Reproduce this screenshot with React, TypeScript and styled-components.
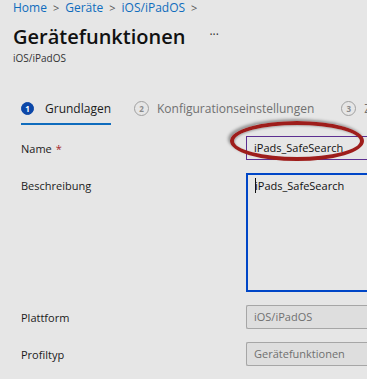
import React from "react";
import styled, { createGlobalStyle } from "styled-components";

const Global = createGlobalStyle`
  html, body { margin: 0; padding: 0; background: #e6e6e6; }
  body { font-family: "Open Sans", "Noto Sans", sans-serif; color: #1b1b1b; overflow: hidden; }
`;

const Page = styled.div`
  width: 367px;
  height: 379px;
  overflow: hidden;
  background: #e6e6e6;
  position: relative;
`;

const Header = styled.div`
  padding: 2px 0 0 13px;
`;

const Breadcrumb = styled.div`
  display: flex;
  align-items: center;
  gap: 6px;
  font-size: 12px;
  line-height: 12px;
  color: #0f6cbd;
  height: 12px;
  white-space: nowrap;
`;

const Sep = styled.span`
  color: #555;
  font-size: 11px;
`;

const TitleRow = styled.div`
  display: flex;
  align-items: center;
  margin-top: 9px;
  height: 26px;
`;

const Title = styled.h1`
  margin: 0;
  font-size: 20px;
  font-weight: 600;
  color: #111;
`;

const More = styled.span`
  margin-left: 24px;
  font-size: 12px;
  color: #333;
  line-height: 1;
  margin-top: -2px;
`;

const Subtitle = styled.div`
  font-size: 10px;
  color: #333;
  margin-top: 2px;
`;

const Tabs = styled.div`
  display: flex;
  margin-top: 32px;
  padding-left: 21px;
  white-space: nowrap;
`;

const Tab = styled.div<{ $active?: boolean }>`
  display: flex;
  align-items: center;
  gap: ${(p) => (p.$active ? "11px" : "8px")};
  height: 22px;
  padding-bottom: 4px;
  margin-right: ${(p) => (p.$active ? "23px" : "27px")};
  border-bottom: 2px solid ${(p) => (p.$active ? "#0f6cbd" : "transparent")};
  color: ${(p) => (p.$active ? "#1b1b1b" : "#707070")};
  font-size: 12px;
`;

const StepCircle = styled.span<{ $active?: boolean }>`
  width: ${(p) => (p.$active ? "13px" : "15px")};
  height: ${(p) => (p.$active ? "13px" : "15px")};
  box-sizing: border-box;
  border-radius: 50%;
  display: inline-flex;
  align-items: center;
  justify-content: center;
  font-size: 8px;
  font-weight: 700;
  background: ${(p) => (p.$active ? "#0c47a8" : "transparent")};
  color: ${(p) => (p.$active ? "#fff" : "#8a8a8a")};
  border: 1px solid ${(p) => (p.$active ? "#0c47a8" : "#a0a0a0")};
`;

const Form = styled.div`
  display: grid;
  grid-template-columns: 225px 1fr;
  padding-left: 21px;
  margin-top: 11px;
  row-gap: 13px;
  align-items: start;
`;

const Label = styled.div`
  font-size: 11px;
  color: #1b1b1b;
  height: 24px;
  display: flex;
  align-items: center;
`;

const Req = styled.span`
  color: #a4262c;
  margin-left: 4px;
`;

const Input = styled.div<{ $variant: "name" | "focus" | "disabled" }>`
  box-sizing: border-box;
  width: 140px;
  height: ${(p) => (p.$variant === "focus" ? "119px" : "24px")};
  padding: ${(p) => (p.$variant === "focus" ? "3px 0 0 7px" : "0 0 0 7px")};
  display: flex;
  align-items: ${(p) => (p.$variant === "focus" ? "flex-start" : "center")};
  font-size: 11px;
  line-height: 16px;
  white-space: nowrap;
  border-radius: ${(p) => (p.$variant === "disabled" ? "2px" : "0")};
  border: ${(p) =>
    p.$variant === "name"
      ? "1px solid #5c2e91"
      : p.$variant === "focus"
      ? "2px solid #0046c7"
      : "1px solid #a6a6a6"};
  border-right: none;
  background: ${(p) => (p.$variant === "disabled" ? "#dedede" : "transparent")};
  color: ${(p) => (p.$variant === "disabled" ? "#707070" : "#111")};
`;

const Caret = styled.span`
  display: inline-block;
  width: 1px;
  height: 15px;
  background: #111;
  margin-right: -1px;
`;

const Highlight = styled.div`
  position: absolute;
  left: 230px;
  top: 121px;
  width: 134px;
  height: 40px;
  border: 4px solid #9e1d1b;
  border-radius: 50%;
  box-sizing: border-box;
  box-shadow: -2px -2px 3px rgba(0, 0, 0, 0.35), inset 1px 1px 2px rgba(0, 0, 0, 0.25);
  pointer-events: none;
`;

export default function App() {
  return (
    <Page>
      <Global />
      <Header>
        <Breadcrumb>
          <span>Home</span>
          <Sep>&gt;</Sep>
          <span>Geräte</span>
          <Sep>&gt;</Sep>
          <span>iOS/iPadOS</span>
          <Sep>&gt;</Sep>
        </Breadcrumb>
        <TitleRow>
          <Title>Gerätefunktionen</Title>
          <More>···</More>
        </TitleRow>
        <Subtitle>iOS/iPadOS</Subtitle>
      </Header>
      <Tabs>
        <Tab $active>
          <StepCircle $active>1</StepCircle>
          Grundlagen
        </Tab>
        <Tab>
          <StepCircle>2</StepCircle>
          Konfigurationseinstellungen
        </Tab>
        <Tab>
          <StepCircle>3</StepCircle>
          Zuweisungen
        </Tab>
      </Tabs>
      <Form>
        <Label>
          Name<Req>*</Req>
        </Label>
        <Input $variant="name">iPads_SafeSearch</Input>
        <Label>Beschreibung</Label>
        <Input $variant="focus">
          <Caret />
          iPads_SafeSearch
        </Input>
        <Label>Plattform</Label>
        <Input $variant="disabled">iOS/iPadOS</Input>
        <Label>Profiltyp</Label>
        <Input $variant="disabled">Gerätefunktionen</Input>
      </Form>
      <Highlight />
    </Page>
  );
}
